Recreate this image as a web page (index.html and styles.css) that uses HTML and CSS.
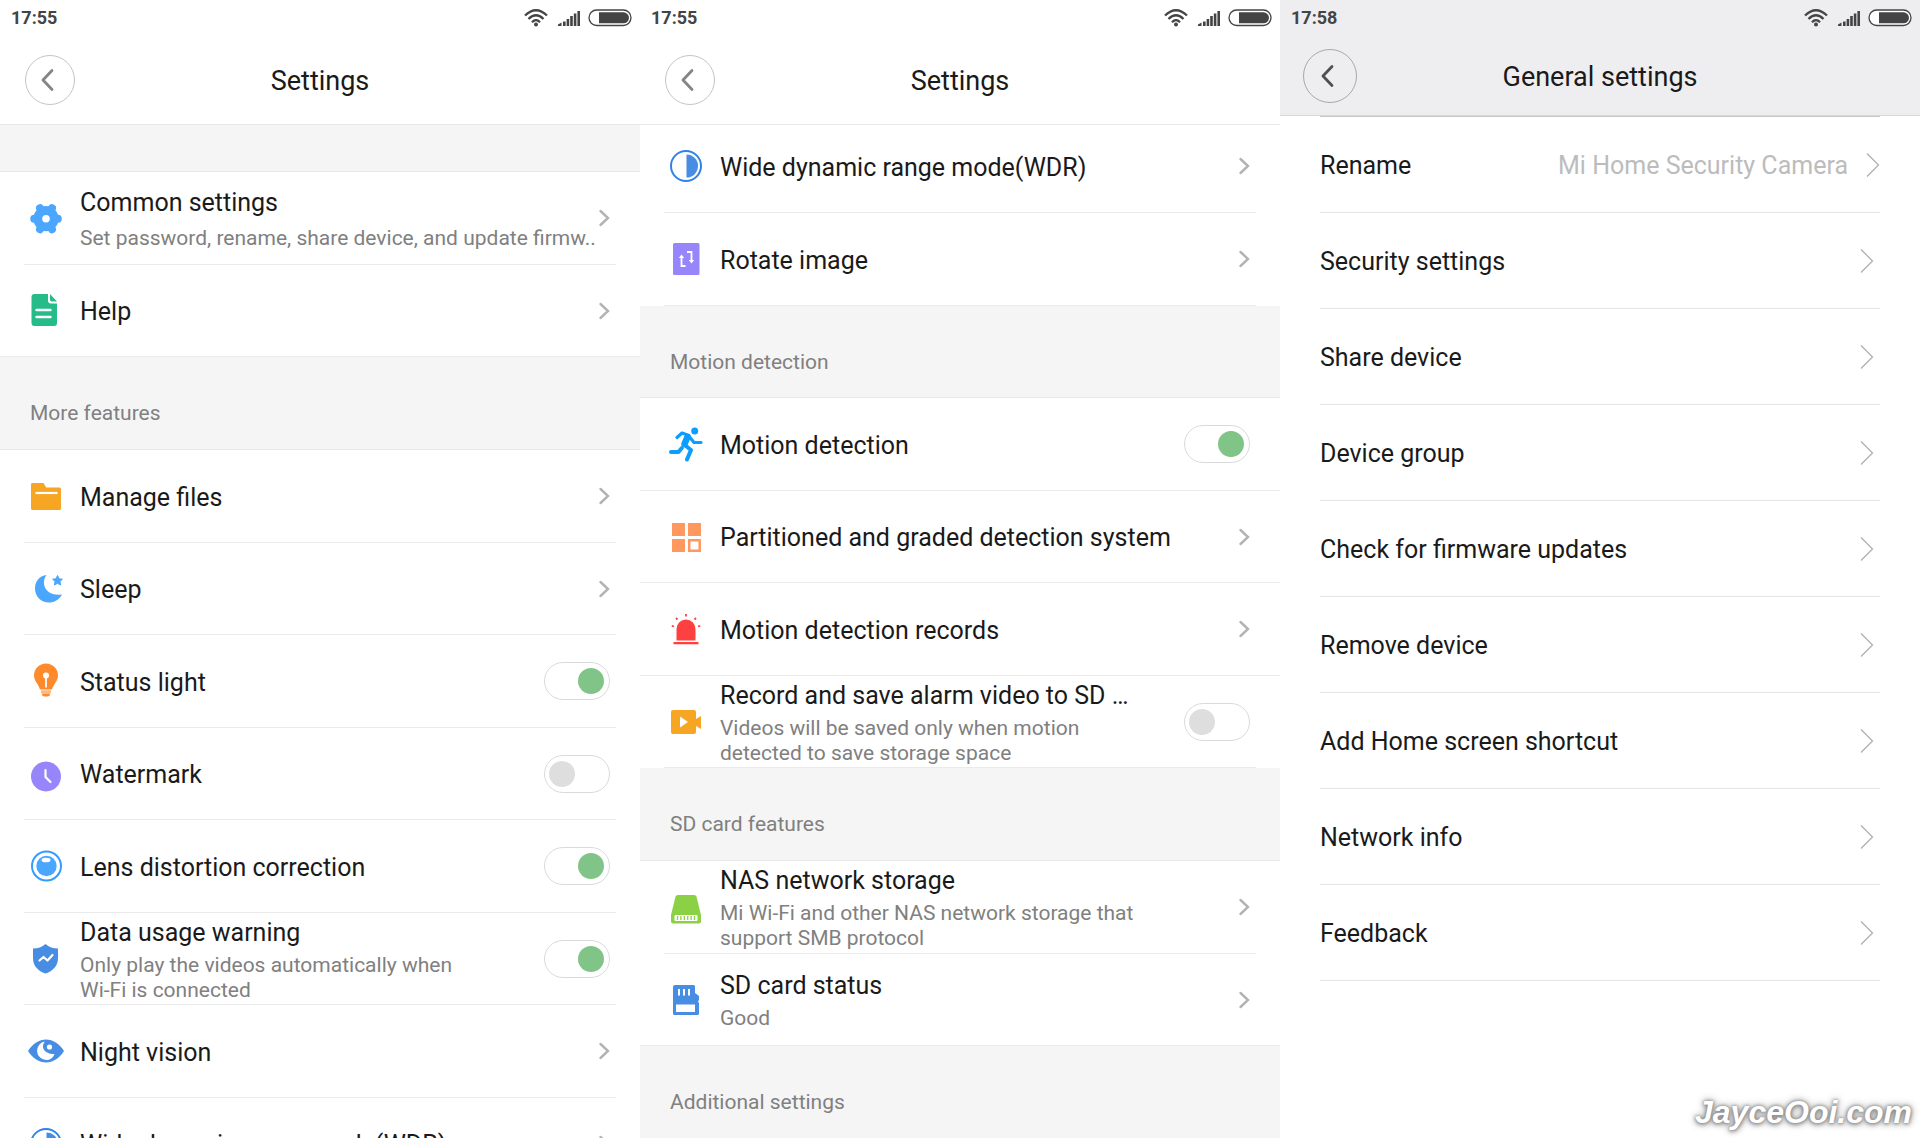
FILE: index.html
```html
<!DOCTYPE html>
<html lang="en">
<head>
<meta charset="utf-8">
<meta name="viewport" content="width=device-width, initial-scale=1">
<title>Camera settings</title>
<link rel="stylesheet" href="styles.css">
</head>
<body>
<svg class="sprite" aria-hidden="true">
  <symbol id="wifi" viewBox="0 0 24 18">
    <g fill="none" stroke="currentColor" stroke-width="2.300">
      <path d="M1 6.500Q12-4 23 6.500"/><path d="M4.500 10Q12 2.500 19.500 10"/><path d="M8 13.200Q12 9 16 13.200"/>
    </g>
    <circle cx="12" cy="15.500" r="2" fill="currentColor"/>
  </symbol>
  <symbol id="signal" viewBox="0 0 22 16">
    <path fill="currentColor" d="M0 16v-1.500L3.500 12.500V16zM5 11.500h2.600V16H5zM8.600 9h2.600v7H8.600zM12.200 6h2.600v10h-2.600zM15.800 3.500h2.600V16h-2.600zM19.400 1H22v15h-2.600z"/>
  </symbol>
  <symbol id="battery" viewBox="0 0 44 18">
    <rect x="1" y="1" width="42" height="15.500" rx="7.700" fill="#fff" stroke="currentColor" stroke-width="1.300"/>
    <path fill="currentColor" d="M11 3.300h24.500a5.500 5.500 0 0 1 0 11H11z"/>
  </symbol>
  <symbol id="back" viewBox="0 0 14 24">
    <path d="M12 2.500 3 12l9 9.500" fill="none" stroke="currentColor" stroke-width="2.800" stroke-linecap="round" stroke-linejoin="round"/>
  </symbol>
  <symbol id="chevron" viewBox="0 0 12 18">
    <path d="M2.500 2 10 9l-7.500 7" fill="none" stroke="currentColor" stroke-width="2.400" stroke-linecap="round"/>
  </symbol>
  <symbol id="chevron-thin" viewBox="0 0 14 26">
    <path d="M1 1.500 12.500 13 1 24.500" fill="none" stroke="currentColor" stroke-width="1.300"/>
  </symbol>
  <symbol id="gear" viewBox="0 0 36 36">
    <circle cx="18" cy="18.700" r="12.600" fill="#4ba6fe"/>
    <path stroke="#4ba6fe" stroke-width="8" stroke-linecap="round" d="M6.200 18.700h23.600M12 8.200l12 21M24 8.200l-12 21"/>
    <circle cx="18" cy="18.700" r="3.800" fill="#fff"/>
  </symbol>
  <symbol id="help" viewBox="0 0 36 36">
    <path fill="#26bc8a" d="M6.500 1H20v6.500a3 3 0 0 0 3 3h6v19.500a3 3 0 0 1-3 3H6.500a3 3 0 0 1-3-3V4a3 3 0 0 1 3-3zM22 1l7 7.500h-5a2 2 0 0 1-2-2z"/>
    <path stroke="#fff" stroke-width="2.400" stroke-linecap="round" d="M8.500 17h14M8.500 24h14"/>
  </symbol>
  <symbol id="folder" viewBox="0 0 36 36">
    <path fill="#f6a623" d="M5 5h10.500l2.800 4.500H31.500A1.500 1.500 0 0 1 33 11v19.500a1.500 1.500 0 0 1-1.500 1.500h-27A1.500 1.500 0 0 1 3 30.500V6.500A1.500 1.500 0 0 1 5 5z"/>
    <path stroke="#fff" stroke-width="2.200" d="M7.500 15h22"/>
  </symbol>
  <symbol id="moon" viewBox="0 0 36 36">
    <path fill="#4ba6fe" d="M18.500 4C12.500 12 17 25.500 34 23.500 31 29 26 31.500 21 31.500 13 31.500 7 25.500 7 17.500 7 10 12 4.500 18.500 4z"/>
    <path fill="#4ba6fe" stroke="#4ba6fe" stroke-linejoin="round" d="M29.500 4.500l1.500 3.300 3.400.400-2.500 2.300.7 3.500-3.100-1.700-3.100 1.700.7-3.500-2.500-2.300 3.400-.400z"/>
  </symbol>
  <symbol id="bulb" viewBox="0 0 36 36">
    <path fill="#ff8a2b" d="M18 .500a12 12 0 0 1 12 12c0 5.500-4.500 8.500-6 14H12C10.500 21 6 18 6 12.500a12 12 0 0 1 12-12z"/>
    <path fill="#ffb77d" d="M13 27.300h10v3H13z"/><path fill="#ff8a2b" d="M14 30.500h8c0 2.800-1.500 3-4 3s-4-.200-4-3z"/>
    <circle cx="18" cy="12.500" r="3" fill="#fff"/><path stroke="#fff" stroke-width="1.800" d="M18 12v12.500"/>
  </symbol>
  <symbol id="clock" viewBox="0 0 36 36">
    <circle cx="18" cy="20.500" r="15" fill="#9785fb"/>
    <path fill="none" stroke="#fff" stroke-width="2.200" stroke-linecap="round" stroke-linejoin="round" d="M17.500 14v7l5 5"/>
  </symbol>
  <symbol id="lens" viewBox="0 0 36 36">
    <circle cx="18.500" cy="18" r="14.500" fill="none" stroke="#339dfe" stroke-width="2"/>
    <circle cx="18.500" cy="18" r="10.200" fill="#4ba6fe"/><ellipse cx="18" cy="12" rx="4.500" ry="2.300" fill="#fff"/>
  </symbol>
  <symbol id="shield" viewBox="0 0 36 36">
    <path fill="#478de4" d="M17.500 3c3.500 3 7.500 4.500 12.500 4.500V17c0 8-5 13-12.500 15.500C10 30 5 25 5 17V7.500C10 7.500 14 6 17.500 3z"/>
    <path fill="none" stroke="#fff" stroke-width="2.200" stroke-linecap="round" stroke-linejoin="round" d="M11.500 19.500l4-3.500 4 3.500 5-5.500"/>
  </symbol>
  <symbol id="eye" viewBox="0 0 36 36">
    <path fill="#478de4" d="M0 18C5 10.500 11 6.500 18 6.500S31 10.500 36 18c-5 7.500-11 11.500-18 11.500S5 25.500 0 18z"/>
    <path fill="#fff" d="M17 8.500c-4 4-2.500 12.500 9.500 12.500-1.500 4-4.500 6-8 6a9.300 9.300 0 0 1-1.500-18.500z"/>
    <circle cx="21.500" cy="14" r="2.600" fill="#fff"/>
  </symbol>
  <symbol id="contrast" viewBox="0 0 36 36">
    <circle cx="18" cy="18" r="15" fill="none" stroke="#2f83e8" stroke-width="2"/>
    <path fill="#478de4" d="M18.500 6.500a11.500 11.500 0 0 1 0 23z"/>
  </symbol>
  <symbol id="rotate" viewBox="0 0 36 36">
    <rect x="5" y="2" width="26.500" height="32" rx="1.500" fill="#9785fb"/>
    <path fill="none" stroke="#fff" stroke-width="1.800" d="M17.500 25h-4V15M19 11h4.500v10"/>
    <path fill="#fff" d="M10.800 17 13.500 13.500l2.700 3.500zM20.800 19h5.400L23.500 22.500z"/>
  </symbol>
  <symbol id="runner" viewBox="0 0 36 36">
    <circle cx="26.700" cy="5" r="3.500" fill="#0c9dfd"/>
    <g fill="none" stroke="#0c9dfd" stroke-linecap="round" stroke-linejoin="round">
      <path stroke-width="3.200" d="M9 11.500l5-4.500 7 2.500M22 11.500l4 5h7"/>
      <path stroke-width="6.500" d="M19.500 11l-3 7"/>
      <path stroke-width="4" d="M16 18.500l7 5.500-4 9.500M3 26h7.500l3.300-4"/>
    </g>
  </symbol>
  <symbol id="zones" viewBox="0 0 36 36">
    <path fill="#ff985f" d="M4 4h13v13H4zM20 4h13v13H20zM4 20h13v13H4z"/>
    <path fill="none" stroke="#ff985f" stroke-width="2.500" d="M21.200 21.200h10.500v10.500H21.200z"/>
  </symbol>
  <symbol id="alarm" viewBox="0 0 36 36">
    <path fill="#fe4040" d="M8.500 29.500V18a9.500 9.500 0 0 1 19 0v11.500zM5.500 31h25v2.300h-25z"/>
    <path stroke="#fe4040" stroke-width="1.800" d="M18 3v2.500M8 7l1.500 1.500M28 7l-1.500 1.500M3.800 14.800l2.200.700M32.200 14.800l-2.200.700"/>
  </symbol>
  <symbol id="video" viewBox="0 0 36 36">
    <path fill="#f6a623" d="M5 6h21a2 2 0 0 1 2 2v7l5-3v13l-5-3v6a2 2 0 0 1-2 2H5a2 2 0 0 1-2-2V8a2 2 0 0 1 2-2z"/>
    <path fill="#fff" d="M12 12.500l8 5.500-8 5.500z"/>
  </symbol>
  <symbol id="nas" viewBox="0 0 36 36">
    <path fill="#8bd146" d="M10 6h16c1.500 0 2.200.700 2.600 2L33 26v6.500a2 2 0 0 1-2 2H5a2 2 0 0 1-2-2V26L7.400 8c.4-1.300 1.100-2 2.600-2z"/>
    <rect x="6.500" y="26" width="23" height="6" rx="1" fill="#fff"/>
    <path stroke="#8bd146" stroke-width="1.300" d="M9.500 27v4M12.900 27v4M16.300 27v4M19.700 27v4M23.100 27v4M26.500 27v4"/>
  </symbol>
  <symbol id="sdcard" viewBox="0 0 36 36">
    <path fill="#478de4" d="M7 3h18.500a1.500 1.500 0 0 1 1.500 1.500V11l4 3v4l-1 1.500 1 1.500v10.500a1.500 1.500 0 0 1-1.500 1.500H6.500A1.500 1.500 0 0 1 5 31.500V5a2 2 0 0 1 2-2z"/>
    <path stroke="#fff" stroke-width="2" d="M11 7v6.500M16 7v6.500M21 7v6.500"/><path fill="#fff" d="M8 22.500h19V30H8z"/>
  </symbol>
</svg>

<main class="app">
  <section class="screen">
    <div class="statusbar">
      <time>17:55</time>
      <svg class="wifi"><use href="#wifi"/></svg><svg class="signal"><use href="#signal"/></svg><svg class="battery"><use href="#battery"/></svg>
    </div>
    <header class="header">
      <button class="back" type="button" aria-label="Back"><svg><use href="#back"/></svg></button>
      <h1>Settings</h1>
    </header>
    <div class="spacer"></div>
    <ul class="list">
      <li class="row"><a href="#"><svg class="icon"><use href="#gear"/></svg><span class="text text-wide"><span class="label">Common settings</span><span class="note">Set password, rename, share device, and update firmw..</span></span><svg class="chevron"><use href="#chevron"/></svg></a></li>
      <li class="row row-full"><a href="#"><svg class="icon"><use href="#help"/></svg><span class="text"><span class="label">Help</span></span><svg class="chevron"><use href="#chevron"/></svg></a></li>
    </ul>
    <h2 class="band tall">More features</h2>
    <ul class="list">
      <li class="row"><a href="#"><svg class="icon"><use href="#folder"/></svg><span class="text"><span class="label">Manage files</span></span><svg class="chevron"><use href="#chevron"/></svg></a></li>
      <li class="row"><a href="#"><svg class="icon"><use href="#moon"/></svg><span class="text"><span class="label">Sleep</span></span><svg class="chevron"><use href="#chevron"/></svg></a></li>
      <li class="row"><label><svg class="icon"><use href="#bulb"/></svg><span class="text"><span class="label">Status light</span></span><input class="toggle" type="checkbox" checked></label></li>
      <li class="row"><label><svg class="icon"><use href="#clock"/></svg><span class="text"><span class="label">Watermark</span></span><input class="toggle" type="checkbox"></label></li>
      <li class="row"><label><svg class="icon"><use href="#lens"/></svg><span class="text"><span class="label">Lens distortion correction</span></span><input class="toggle" type="checkbox" checked></label></li>
      <li class="row"><label><svg class="icon"><use href="#shield"/></svg><span class="text"><span class="label">Data usage warning</span><span class="note">Only play the videos automatically when <span class="nowrap">Wi-Fi</span> is connected</span></span><input class="toggle" type="checkbox" checked></label></li>
      <li class="row"><a href="#"><svg class="icon"><use href="#eye"/></svg><span class="text"><span class="label">Night vision</span></span><svg class="chevron"><use href="#chevron"/></svg></a></li>
      <li class="row"><a href="#"><svg class="icon"><use href="#contrast"/></svg><span class="text"><span class="label">Wide dynamic range mode(WDR)</span></span><svg class="chevron"><use href="#chevron"/></svg></a></li>
    </ul>
  </section>

  <section class="screen">
    <div class="statusbar">
      <time>17:55</time>
      <svg class="wifi"><use href="#wifi"/></svg><svg class="signal"><use href="#signal"/></svg><svg class="battery"><use href="#battery"/></svg>
    </div>
    <header class="header">
      <button class="back" type="button" aria-label="Back"><svg><use href="#back"/></svg></button>
      <h1>Settings</h1>
    </header>
    <ul class="list scrolled">
      <li class="row"><a href="#"><svg class="icon"><use href="#contrast"/></svg><span class="text"><span class="label">Wide dynamic range mode(WDR)</span></span><svg class="chevron"><use href="#chevron"/></svg></a></li>
      <li class="row tall"><a href="#"><svg class="icon"><use href="#rotate"/></svg><span class="text"><span class="label">Rotate image</span></span><svg class="chevron"><use href="#chevron"/></svg></a></li>
    </ul>
    <h2 class="band">Motion detection</h2>
    <ul class="list">
      <li class="row row-full"><label><svg class="icon"><use href="#runner"/></svg><span class="text"><span class="label">Motion detection</span></span><input class="toggle" type="checkbox" checked></label></li>
      <li class="row row-full"><a href="#"><svg class="icon"><use href="#zones"/></svg><span class="text"><span class="label">Partitioned and graded detection system</span></span><svg class="chevron"><use href="#chevron"/></svg></a></li>
      <li class="row row-full"><a href="#"><svg class="icon"><use href="#alarm"/></svg><span class="text"><span class="label">Motion detection records</span></span><svg class="chevron"><use href="#chevron"/></svg></a></li>
      <li class="row"><label><svg class="icon"><use href="#video"/></svg><span class="text"><span class="label">Record and save alarm video to SD …</span><span class="note">Videos will be saved only when motion detected to save storage space</span></span><input class="toggle" type="checkbox"></label></li>
    </ul>
    <h2 class="band tall">SD card features</h2>
    <ul class="list">
      <li class="row"><a href="#"><svg class="icon"><use href="#nas"/></svg><span class="text"><span class="label">NAS network storage</span><span class="note">Mi Wi-Fi and other NAS network storage that support SMB protocol</span></span><svg class="chevron"><use href="#chevron"/></svg></a></li>
      <li class="row row-full"><a href="#"><svg class="icon"><use href="#sdcard"/></svg><span class="text"><span class="label">SD card status</span><span class="note">Good</span></span><svg class="chevron"><use href="#chevron"/></svg></a></li>
    </ul>
    <h2 class="band band-open">Additional settings</h2>
  </section>

  <section class="screen general">
    <div class="statusbar">
      <time>17:58</time>
      <svg class="wifi"><use href="#wifi"/></svg><svg class="signal"><use href="#signal"/></svg><svg class="battery"><use href="#battery"/></svg>
    </div>
    <header class="header">
      <button class="back" type="button" aria-label="Back"><svg><use href="#back"/></svg></button>
      <h1>General settings</h1>
    </header>
    <ul class="plain-list">
      <li><a class="with-value" href="#"><span class="name">Rename</span><span class="name value">Mi Home Security Camera</span><svg class="chevron-thin"><use href="#chevron-thin"/></svg></a></li>
      <li><a href="#"><span class="name">Security settings</span><svg class="chevron-thin"><use href="#chevron-thin"/></svg></a></li>
      <li><a href="#"><span class="name">Share device</span><svg class="chevron-thin"><use href="#chevron-thin"/></svg></a></li>
      <li><a href="#"><span class="name">Device group</span><svg class="chevron-thin"><use href="#chevron-thin"/></svg></a></li>
      <li><a href="#"><span class="name">Check for firmware updates</span><svg class="chevron-thin"><use href="#chevron-thin"/></svg></a></li>
      <li><a href="#"><span class="name">Remove device</span><svg class="chevron-thin"><use href="#chevron-thin"/></svg></a></li>
      <li><a href="#"><span class="name">Add Home screen shortcut</span><svg class="chevron-thin"><use href="#chevron-thin"/></svg></a></li>
      <li><a href="#"><span class="name">Network info</span><svg class="chevron-thin"><use href="#chevron-thin"/></svg></a></li>
      <li><a href="#"><span class="name">Feedback</span><svg class="chevron-thin"><use href="#chevron-thin"/></svg></a></li>
    </ul>
    <span class="credit">JayceOoi.com</span>
  </section>
</main>
</body>
</html>
```
FILE: styles.css
```css
*, *::before { box-sizing: border-box; }

body {
  margin: 0;
  background: #fff;
  color: #1a1a1a;
  font-family: Roboto, "Liberation Sans", sans-serif;
  font-size: 25px;
  line-height: 30px;
}

h1, h2, ul { margin: 0; padding: 0; font-weight: 400; }
ul { list-style: none; }
a { color: inherit; text-decoration: none; }
svg { display: block; flex: none; }
.sprite { position: absolute; width: 0; height: 0; }

.app {
  display: grid;
  grid-template-columns: repeat(3, 1fr);
  height: 100vh;
  overflow: hidden;
}

.screen {
  position: relative;
  min-width: 0;
  overflow: hidden;
  background: #fff;
}

/* Phone status bar */
.statusbar {
  display: flex;
  align-items: center;
  height: 36px;
  padding: 0 8px 0 11px;
  color: #444;
  font-size: 18px;
  font-weight: 700;
}
.statusbar time { flex: 1; }
.wifi { width: 24px; height: 18px; margin-right: 10px; }
.signal { width: 22px; height: 16px; margin-right: 8px; }
.battery { width: 44px; height: 18px; }

/* Title bar */
.header {
  position: relative;
  z-index: 1;
  display: grid;
  grid-template-columns: 50px 1fr 50px;
  align-items: center;
  height: 89px;
  padding: 0 25px;
  background: #fff;
  border-bottom: 1px solid #e8e8e8;
}
.header h1 { padding-top: 2px; font-size: 27px; line-height: 32px; text-align: center; }
.back {
  display: grid;
  place-items: center;
  width: 50px;
  height: 50px;
  padding: 0 6px 0 0;
  background: none;
  border: 1px solid #c4c4c4;
  border-radius: 50%;
  color: #858585;
}
.back svg { width: 14px; height: 24px; }

/* Grey separators */
.spacer { height: 47px; background: #f5f5f5; border-bottom: 1px solid #e8e8e8; }
.band {
  min-height: 92px;
  padding: 44px 30px 0;
  background: #f5f5f5;
  border-bottom: 1px solid #e8e8e8;
  color: #808080;
  font-size: 21px;
  line-height: 25px;
}
.band-open { border-bottom: 0; }

/* Setting rows */
.row { display: grid; min-height: 92px; margin: 0 24px; border-bottom: 1px solid #ebebeb; }
.row:nth-child(odd), .tall { min-height: 93px; }
.row-full { margin: 0; padding: 0 24px; }
.row > * {
  display: flex;
  align-items: center;
  gap: 16px;
  min-width: 0;
  padding: 0 6px 0 4px;
}
.scrolled { margin-top: -5px; }
.icon { width: 36px; height: 36px; }
.text { flex: 1; min-width: 0; padding-top: 3px; }
.label, .note { display: block; }
.label, .nowrap { white-space: nowrap; }
.note { max-width: 420px; margin-top: 5px; color: #808080; font-size: 21px; line-height: 25px; }
.text-wide .note { max-width: none; margin: 8px -24px 0 0; white-space: nowrap; }
.chevron { width: 12px; height: 18px; color: #b3b3b3; }

.toggle {
  display: flex;
  flex: none;
  align-items: center;
  width: 66px;
  height: 38px;
  margin: 0;
  padding: 0 5px 0 4px;
  appearance: none;
  background: #fff;
  border: 1px solid #dadada;
  border-radius: 19px;
}
.toggle::before { content: ""; width: 26px; height: 26px; background: #dedede; border-radius: 50%; }
.toggle:checked { justify-content: flex-end; }
.toggle:checked::before { background: #80c587; }

/* General settings */
.general .statusbar, .general .header { background: #eeeef0; }
.general .header { height: 80px; padding: 0 23px; grid-template-columns: 54px 1fr 54px; border-color: #d8d8da; }
.general .back { width: 54px; height: 54px; border-color: #a8a8a8; color: #505050; }
.plain-list { margin: 0 40px; border-top: 1px solid #c8c8c8; }
.plain-list li { display: grid; height: 96px; border-bottom: 1px solid #e6e6e6; }
.plain-list a { display: flex; align-items: center; justify-content: space-between; padding-right: 6px; }
.plain-list .with-value { padding-right: 0; }
.name { padding-top: 2px; }
.value { flex: 1; margin-right: 18px; color: #bcbcbc; text-align: right; }
.chevron-thin { width: 14px; height: 26px; color: #b0b0b0; }

.credit {
  position: absolute;
  right: 8px;
  bottom: 8px;
  color: #fff;
  font: italic bold 32px/36px "Liberation Sans", Arial, sans-serif;
  text-shadow: 0 0 3px #888, 0 1px 5px #777, 0 0 9px #999;
}
```
